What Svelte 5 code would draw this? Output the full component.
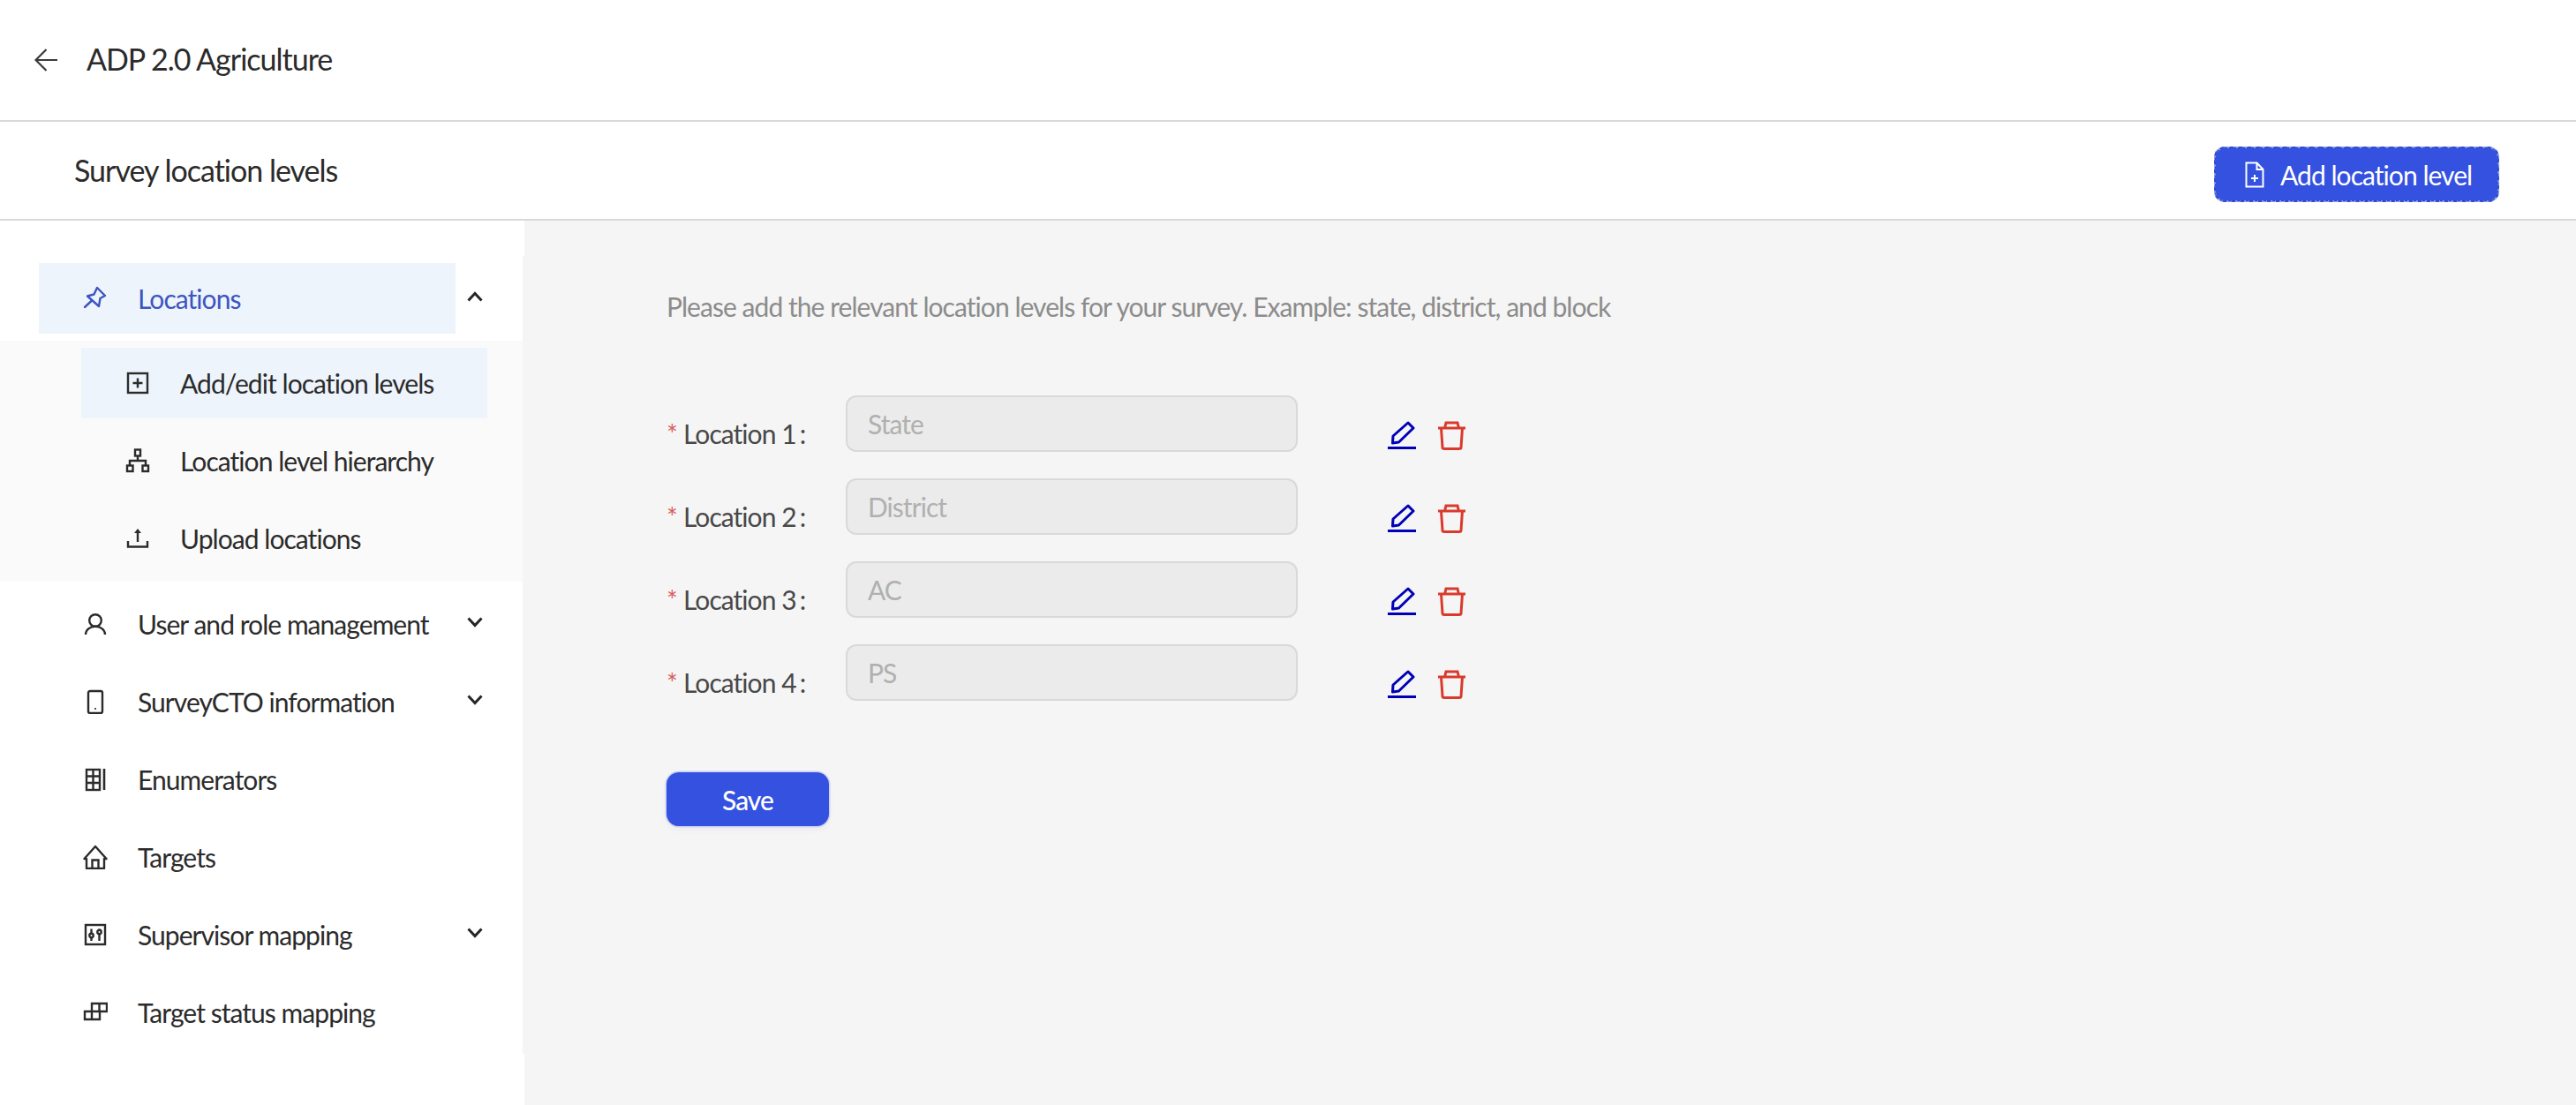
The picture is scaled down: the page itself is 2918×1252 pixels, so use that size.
<script>
  const subItems = [
    { key: 'add', label: 'Add/edit location levels', active: true },
    { key: 'tree', label: 'Location level hierarchy' },
    { key: 'upload', label: 'Upload locations' }
  ];
  const items = [
    { key: 'user', label: 'User and role management', caret: true },
    { key: 'phone', label: 'SurveyCTO information', caret: true },
    { key: 'grid', label: 'Enumerators' },
    { key: 'home', label: 'Targets' },
    { key: 'sliders', label: 'Supervisor mapping', caret: true },
    { key: 'blocks', label: 'Target status mapping' }
  ];
  const levels = ['State', 'District', 'AC', 'PS'];
</script>

{#snippet icon(key)}
  <svg class="icon" viewBox="0 0 28 28" fill="none" stroke="currentColor" stroke-width="2.4">
    {#if key === 'pin'}
      <path d="M16 2 L25 11 L19.5 14 L18 23 L5 11.5 L12.5 9.5 Z" stroke-linejoin="round" />
      <path d="M9.5 17 L2 24" stroke-linecap="round" />
    {:else if key === 'add'}
      <rect x="3" y="3" width="22" height="22" />
      <path d="M14 8.5 V19.5 M8.5 14 H19.5" />
    {:else if key === 'tree'}
      <rect x="11" y="1.5" width="6" height="7" />
      <rect x="2" y="19.5" width="6.5" height="6.5" />
      <rect x="19.5" y="19.5" width="6.5" height="6.5" />
      <path d="M14 8.5 V14 M5 19.5 V14 H23 V19.5" />
    {:else if key === 'upload'}
      <path d="M3 17 V23.5 H25 V17" />
      <path d="M14 18 V5" />
      <path d="M10 8 L14 3 L18 8 Z" fill="currentColor" stroke="none" />
    {:else if key === 'user'}
      <circle cx="14" cy="10" r="6.8" />
      <path d="M3 26 C3 20.5 8 16.8 14 16.8 C20 16.8 25 20.5 25 26" />
    {:else if key === 'phone'}
      <rect x="6" y="2" width="16" height="25" rx="2" />
      <circle cx="14" cy="22" r="1.1" fill="currentColor" stroke="none" />
    {:else if key === 'grid'}
      <rect x="4" y="3" width="15" height="23" />
      <path d="M11.5 3 V26 M4 10.5 H19 M4 18 H19" />
      <path d="M24 2 V26" stroke-width="2.6" />
    {:else if key === 'home'}
      <path d="M1.5 16 L14 2 L26.5 16 H24 V27 H4 V16 Z" stroke-linejoin="round" />
      <path d="M10.5 27 V17.5 H17.5 V27" />
    {:else if key === 'sliders'}
      <rect x="3" y="3" width="22" height="22" />
      <path d="M9.5 7.5 V12.8 M9.5 17.2 V21 M18.5 7.5 V8.8 M18.5 13.2 V21" />
      <circle cx="9.5" cy="15" r="2.2" />
      <circle cx="18.5" cy="11" r="2.2" />
    {:else if key === 'blocks'}
      <path d="M10 13 V4 H27 V13 H19 M18.5 4 V13" />
      <path d="M2 13 H19 V22 H2 Z M10 13 V22" />
    {/if}
  </svg>
{/snippet}

{#snippet caret(up)}
  <svg class="caret" viewBox="0 0 18 12" fill="none" stroke="#262626" stroke-width="3">
    <path d={up ? 'M1.5 10.5 L9 2.5 L16.5 10.5' : 'M1.5 1.5 L9 9.5 L16.5 1.5'} />
  </svg>
{/snippet}

<div class="page">
  <header class="topbar">
    <svg class="back" viewBox="0 0 26 26" fill="none" stroke="#3a3a3a" stroke-width="2.2">
      <path d="M26 13 H2 M13.5 1 L1.5 13 L13.5 25" />
    </svg>
    <span>ADP 2.0 Agriculture</span>
  </header>

  <div class="subbar">
    <h1>Survey location levels</h1>
    <button class="add-btn">
      <svg viewBox="0 0 22 30" width="22" height="30" fill="none" stroke="#fff" stroke-width="2">
        <path d="M1.5 1.5 H13.5 L20.5 9 V28.5 H1.5 Z M13.5 1.5 V9 H20.5" />
        <path d="M11 15 V23 M7 19 H15" />
      </svg>
      Add location level
    </button>
  </div>

  <div class="body">
    <aside class="sider">
      <nav class="menu">
        <div class="row">
          <div class="item selected">{@render icon('pin')}<span>Locations</span></div>
          {@render caret(true)}
        </div>
        <div class="sub">
          {#each subItems as s}
            <div class="item sub-item" class:active={s.active}>{@render icon(s.key)}<span>{s.label}</span></div>
          {/each}
        </div>
        {#each items as it}
          <div class="row">
            <div class="item">{@render icon(it.key)}<span>{it.label}</span></div>
            {#if it.caret}{@render caret(false)}{/if}
          </div>
        {/each}
      </nav>
    </aside>

    <main class="content">
      <p class="intro">Please add the relevant location levels for your survey. Example: state, district, and block</p>
      <div class="levels">
        {#each levels as level, i}
          <div class="level">
            <label for="loc{i}"><span class="req">*</span>Location {i + 1}<span class="colon">:</span></label>
            <input id="loc{i}" disabled value={level} />
            <div class="actions">
              <svg viewBox="0 0 32 32" width="32" height="32" fill="none" stroke="#0000b8" stroke-width="3">
                <path d="M6 17 L23 2 L29 8 L12.5 24 L5.5 25 Z" stroke-linejoin="round" />
                <path d="M0 30.5 H32" />
              </svg>
              <svg viewBox="0 0 31 33" width="31" height="33" fill="none" stroke="#d93a2b" stroke-width="3">
                <path d="M0 8 H31 M7.5 8 L9 2 H22 L23.5 8" />
                <path d="M3.5 8 L5 30 Q5 31.5 7 31.5 H24 Q26 31.5 26 30 L27.5 8" />
              </svg>
            </div>
          </div>
        {/each}
      </div>
      <button class="save">Save</button>
    </main>
  </div>
</div>

<style>
  :global(body) {
    margin: 0;
    background: #fff;
  }

  .page {
    display: flex;
    flex-direction: column;
    width: 2918px;
    height: 1252px;
    overflow: hidden;
    font-family: Lato, "Liberation Sans", sans-serif;
    font-size: 30px;
    letter-spacing: -0.95px;
    color: #2b2b2b;
  }

  .topbar {
    display: flex;
    align-items: center;
    gap: 33px;
    height: 136px;
    padding-left: 39px;
    border-bottom: 2px solid #d9d9d9;
    font-size: 34px;
    letter-spacing: -1px;
    flex: none;
  }

  .topbar span {
    margin-bottom: 4px;
  }

  .back {
    width: 26px;
    height: 26px;
  }

  .subbar {
    display: flex;
    align-items: center;
    justify-content: space-between;
    height: 110px;
    padding: 0 87px 0 84px;
    border-bottom: 2px solid #d9d9d9;
    flex: none;
  }

  h1 {
    margin: 0 0 2px;
    font-size: 34px;
    letter-spacing: -1px;
    font-weight: 400;
  }

  .add-btn {
    display: flex;
    align-items: center;
    gap: 18px;
    width: 323px;
    height: 63px;
    margin-top: 9px;
    padding: 0 0 0 33px;
    box-sizing: border-box;
    background: #3451e0;
    border: 2px dashed #8f9fe6;
    outline: 1px dashed #2d46bd;
    outline-offset: -2px;
    border-radius: 12px;
    color: #fff;
    font: inherit;
    letter-spacing: inherit;
  }

  .body {
    display: flex;
    flex: 1;
    min-height: 0;
  }

  .sider {
    width: 594px;
    padding: 40px 0 58px;
    box-sizing: border-box;
    background: #fff;
    flex: none;
  }

  .menu {
    height: 100%;
    padding-top: 8px;
    box-sizing: border-box;
    border-right: 2px solid #f5f5f5;
  }

  .row {
    display: flex;
    align-items: center;
    height: 80px;
    margin-bottom: 8px;
  }

  .item {
    display: flex;
    align-items: center;
    gap: 34px;
    width: 472px;
    height: 80px;
    margin-left: 44px;
    padding-left: 50px;
    box-sizing: border-box;
    flex: none;
    white-space: nowrap;
  }

  .selected {
    background: #eef4fc;
    color: #3c55c0;
  }

  .sub {
    display: flex;
    flex-direction: column;
    gap: 8px;
    padding: 8px 0 9px;
    margin-bottom: 8px;
    background: #fafafa;
  }

  .sub-item {
    width: 460px;
    height: 80px;
    margin-left: 92px;
    padding-left: 50px;
    gap: 34px;
  }

  .active {
    background: #eef4fc;
  }

  .icon {
    width: 28px;
    height: 28px;
    flex: none;
  }

  .caret {
    width: 18px;
    height: 12px;
    margin: -4px 0 0 13px;
    flex: none;
  }

  .content {
    flex: 1;
    padding: 77px 0 0 161px;
    background: #f5f5f5;
  }

  .intro {
    margin: 0 0 81px;
    line-height: 40px;
    color: #8c8c8c;
  }

  .levels {
    display: flex;
    flex-direction: column;
    gap: 30px;
  }

  .level {
    display: flex;
    height: 64px;
  }

  label {
    width: 203px;
    padding-top: 23px;
    line-height: 40px;
    color: #484848;
    box-sizing: border-box;
    flex: none;
    white-space: nowrap;
  }

  .req {
    display: inline-block;
    width: 19px;
    color: #d9605c;
  }

  .colon {
    margin-left: 4px;
  }

  input {
    width: 512px;
    height: 64px;
    padding: 0 23px;
    box-sizing: border-box;
    background: #ebebeb;
    border: 2px solid #d9d9d9;
    border-radius: 12px;
    color: #b0b0b0;
    font: inherit;
    letter-spacing: inherit;
    -webkit-text-fill-color: #b0b0b0;
    opacity: 1;
  }

  .actions {
    display: flex;
    align-items: flex-start;
    gap: 25px;
    margin: 29px 0 0 102px;
  }

  .save {
    display: block;
    width: 184px;
    height: 61px;
    margin-top: 81px;
    background: #3451e0;
    border: none;
    border-radius: 14px;
    box-shadow: 0 0 0 1.5px #c9d2f3, 0 4px 8px rgba(0, 0, 0, 0.04);
    color: #fff;
    font: inherit;
    letter-spacing: inherit;
    font-weight: 500;
  }
</style>
